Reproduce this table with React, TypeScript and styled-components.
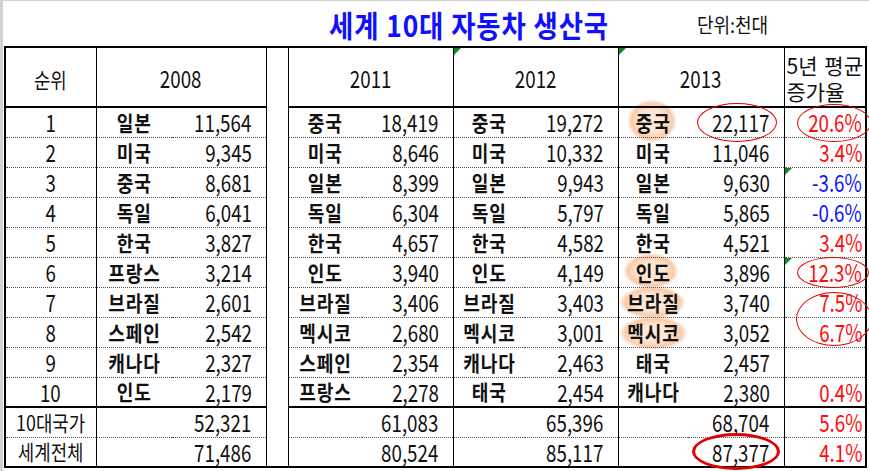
import React from "react";
import styled, { createGlobalStyle } from "styled-components";

const GlobalStyle = createGlobalStyle`
  html, body { margin: 0; padding: 0; background: #fff; }
  body { font-family: "Noto Sans CJK KR", "Noto Sans", sans-serif; }
`;

const Sheet = styled.div`
  position: relative;
  width: 869px;
  height: 471px;
  box-sizing: border-box;
  padding-left: 4px;
  background: #fff;
  box-shadow: inset 3px 1px 0 #d2d2d2;
  overflow: hidden;
`;

const TitleBar = styled.div`
  display: flex;
  align-items: center;
  height: 46px;
  box-sizing: border-box;
  padding: 2px 101px 0 325px;
`;

const Title = styled.div`
  font-size: 30px;
  font-weight: 700;
  color: #1010ff;
  letter-spacing: 1px;
  transform: scaleX(0.88);
  transform-origin: left center;
  white-space: pre;
`;

const Unit = styled.div`
  margin-left: auto;
  font-size: 20px;
  color: #111;
  transform: scaleX(0.9);
  transform-origin: right center;
`;

const Grid = styled.table`
  position: relative;
  z-index: 1;
  table-layout: fixed;
  border-collapse: collapse;
  width: 862px;
  border: 2px solid #000;
  color: #111;
`;

const HeadCell = styled.th`
  position: relative;
  height: 60px;
  box-sizing: border-box;
  padding: 2px 0 0;
  border: 1px solid #000;
  border-bottom: 2px solid #000;
  font-weight: 400;
  font-size: 24px;
  line-height: 1;
  text-align: center;
  vertical-align: middle;
`;

const Cell = styled.td<{ $align?: "left" | "center" | "right"; $sep?: "dot" | "solid" | "none"; $lb?: boolean; $rb?: boolean }>`
  position: relative;
  height: 30px;
  padding: 0 ${(p) => (p.$align === "right" ? "14px" : "0")} 0 0;
  box-sizing: border-box;
  text-align: ${(p) => p.$align ?? "center"};
  vertical-align: middle;
  line-height: 1;
  overflow: visible;
  border-bottom: ${(p) =>
    p.$sep === "solid" ? "2px solid #000" : p.$sep === "none" ? "0" : "1px dotted #555"};
  border-left: ${(p) => (p.$lb ? "1px solid #000" : "0")};
  border-right: ${(p) => (p.$rb ? "1px solid #000" : "0")};
`;

const GapCell = styled.td`
  border-left: 1px solid #000;
  border-right: 1px solid #000;
  border-top: 0;
  border-bottom: 0;
  padding: 0;
`;

const Num = styled.span<{ $color?: string; $origin?: string }>`
  display: inline-block;
  font-size: 24px;
  font-weight: 400;
  color: ${(p) => p.$color ?? "#111"};
  transform: scaleX(0.78);
  transform-origin: ${(p) => p.$origin ?? "right"} center;
  white-space: nowrap;
`;

const Name = styled.span`
  display: inline-block;
  font-size: 21px;
  font-weight: 700;
  color: #111;
  letter-spacing: 1px;
  transform: scaleX(0.86);
  transform-origin: center;
  white-space: nowrap;
`;

const Label = styled.span`
  display: inline-block;
  font-size: 21px;
  font-weight: 400;
  transform: scaleX(0.85);
  transform-origin: center;
  white-space: nowrap;
`;

const RateHead = styled.div`
  display: flex;
  flex-direction: column;
  gap: 5px;
  padding: 0 2px;
  font-size: 21px;
  text-align: left;
`;

const RateLine = styled.div`
  display: flex;
  justify-content: space-between;
`;

const Flag = styled.span`
  position: absolute;
  left: 0;
  top: 0;
  width: 0;
  height: 0;
  border-top: 7px solid #0f8a1c;
  border-right: 7px solid transparent;
`;

const Highlight = styled.div`
  position: absolute;
  z-index: 0;
  border-radius: 50%;
  background: radial-gradient(closest-side, #fde6d3 50%, #f9cbaa 82%, rgba(249, 203, 170, 0) 100%);
`;

const Ring = styled.div<{ $w?: number }>`
  position: absolute;
  z-index: 2;
  border-radius: 50%;
  border: ${(p) => p.$w ?? 1}px solid #e00000;
  box-sizing: border-box;
`;

type Row = [number, string, string, string, string, string, string, string, string, string, string];

const rows: Row[] = [
  [1, "일본", "11,564", "중국", "18,419", "중국", "19,272", "중국", "22,117", "20.6%", "r"],
  [2, "미국", "9,345", "미국", "8,646", "미국", "10,332", "미국", "11,046", "3.4%", "r"],
  [3, "중국", "8,681", "일본", "8,399", "일본", "9,943", "일본", "9,630", "-3.6%", "b"],
  [4, "독일", "6,041", "독일", "6,304", "독일", "5,797", "독일", "5,865", "-0.6%", "b"],
  [5, "한국", "3,827", "한국", "4,657", "한국", "4,582", "한국", "4,521", "3.4%", "r"],
  [6, "프랑스", "3,214", "인도", "3,940", "인도", "4,149", "인도", "3,896", "12.3%", "r"],
  [7, "브라질", "2,601", "브라질", "3,406", "브라질", "3,403", "브라질", "3,740", "7.5%", "r"],
  [8, "스페인", "2,542", "멕시코", "2,680", "멕시코", "3,001", "멕시코", "3,052", "6.7%", "r"],
  [9, "캐나다", "2,327", "스페인", "2,354", "캐나다", "2,463", "태국", "2,457", "", ""],
  [10, "인도", "2,179", "프랑스", "2,278", "태국", "2,454", "캐나다", "2,380", "0.4%", "r"],
];

const totals: [string, string, string, string, string, string][] = [
  ["10대국가", "52,321", "61,083", "65,396", "68,704", "5.6%"],
  ["세계전체", "71,486", "80,524", "85,117", "87,377", "4.1%"],
];

const flagRows = new Set([3, 6]);
const colWidths = [91, 76, 94, 22, 74, 91, 72, 93, 70, 96, 82];

const rateColor = (k: string) => (k === "b" ? "#0a14ff" : "#ff0a0a");

export default function App() {
  return (
    <>
      <GlobalStyle />
      <Sheet>
        <TitleBar>
          <Title>세계 10대 자동차 생산국</Title>
          <Unit>단위:천대</Unit>
        </TitleBar>

        <Highlight style={{ left: 627, top: 99, width: 50, height: 44 }} />
        <Highlight style={{ left: 623, top: 253, width: 56, height: 36 }} />
        <Highlight style={{ left: 619, top: 286, width: 67, height: 33 }} />
        <Highlight style={{ left: 619, top: 316, width: 69, height: 34 }} />

        <Grid>
          <colgroup>
            {colWidths.map((w, i) => (
              <col key={i} style={{ width: w }} />
            ))}
          </colgroup>
          <thead>
            <tr>
              <HeadCell><Label>순위</Label></HeadCell>
              <HeadCell colSpan={2}><Num $origin="center">2008</Num></HeadCell>
              <GapCell />
              <HeadCell colSpan={2}><Num $origin="center">2011</Num></HeadCell>
              <HeadCell colSpan={2}><Flag /><Num $origin="center">2012</Num></HeadCell>
              <HeadCell colSpan={2}><Flag /><Num $origin="center">2013</Num></HeadCell>
              <HeadCell>
                <RateHead>
                  <RateLine><span>5년</span><span>평균</span></RateLine>
                  <RateLine><span>증가율</span></RateLine>
                </RateHead>
              </HeadCell>
            </tr>
          </thead>
          <tbody>
            {rows.map((r) => {
              const sep = r[0] === 10 ? "solid" : "dot";
              return (
                <tr key={r[0]}>
                  <Cell $sep={sep} $rb><Num $origin="center">{r[0]}</Num></Cell>
                  <Cell $sep={sep} $lb><Name>{r[1]}</Name></Cell>
                  <Cell $sep={sep} $align="right" $rb><Num>{r[2]}</Num></Cell>
                  <GapCell />
                  <Cell $sep={sep} $lb><Name>{r[3]}</Name></Cell>
                  <Cell $sep={sep} $align="right"><Num>{r[4]}</Num></Cell>
                  <Cell $sep={sep} $lb><Name>{r[5]}</Name></Cell>
                  <Cell $sep={sep} $align="right"><Num>{r[6]}</Num></Cell>
                  <Cell $sep={sep} $lb><Name>{r[7]}</Name></Cell>
                  <Cell $sep={sep} $align="right" $rb><Num>{r[8]}</Num></Cell>
                  <Cell $sep={sep} $align="right" $lb style={{ paddingRight: 3 }}>
                    {flagRows.has(r[0]) && <Flag />}
                    <Num $color={rateColor(r[10])}>{r[9]}</Num>
                  </Cell>
                </tr>
              );
            })}
            {totals.map((t, i) => {
              const sep = i === 0 ? "dot" : "none";
              return (
                <tr key={t[0]}>
                  <Cell $sep={sep} $rb><Label>{t[0]}</Label></Cell>
                  <Cell $sep={sep} colSpan={2} $align="right" $rb><Num>{t[1]}</Num></Cell>
                  <GapCell />
                  <Cell $sep={sep} colSpan={2} $align="right" $lb><Num>{t[2]}</Num></Cell>
                  <Cell $sep={sep} colSpan={2} $align="right" $lb><Num>{t[3]}</Num></Cell>
                  <Cell $sep={sep} colSpan={2} $align="right" $lb $rb><Num>{t[4]}</Num></Cell>
                  <Cell $sep={sep} $align="right" $lb style={{ paddingRight: 3 }}>
                    <Num $color="#ff0a0a">{t[5]}</Num>
                  </Cell>
                </tr>
              );
            })}
          </tbody>
        </Grid>

        <Ring style={{ left: 697, top: 103, width: 80, height: 39 }} />
        <Ring style={{ left: 797, top: 104, width: 74, height: 38 }} />
        <Ring style={{ left: 797, top: 257, width: 72, height: 31 }} />
        <Ring style={{ left: 796, top: 292, width: 76, height: 54 }} />
        <Ring $w={3} style={{ left: 692, top: 433, width: 88, height: 37 }} />
      </Sheet>
    </>
  );
}
